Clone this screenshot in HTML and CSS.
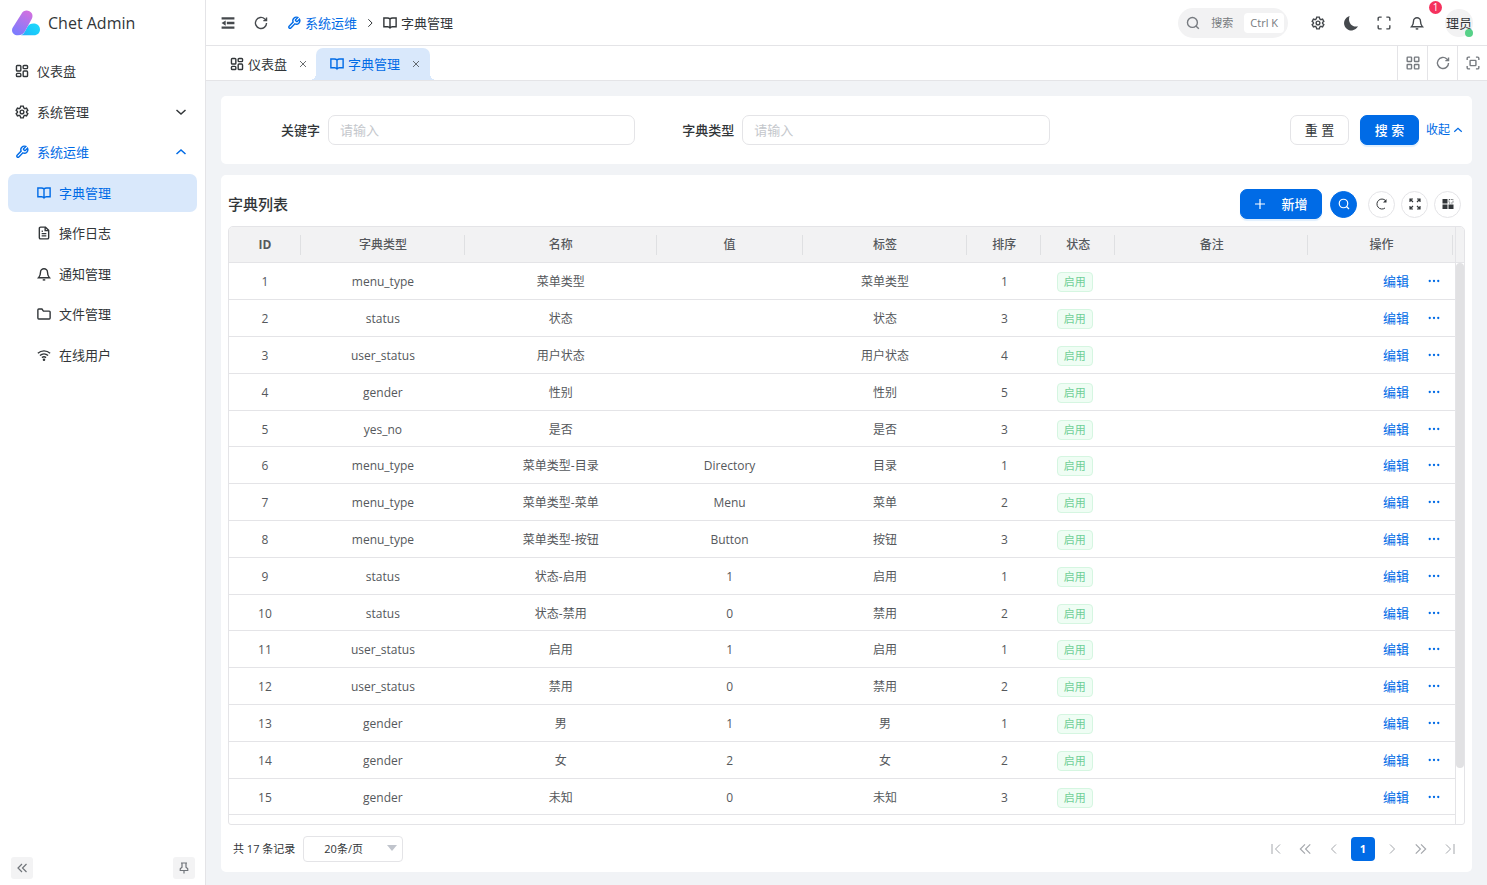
FILE: index.html
```html
<!DOCTYPE html>
<html lang="zh-CN">
<head>
<meta charset="utf-8">
<meta name="viewport" content="width=device-width, initial-scale=1">
<title>字典管理 - Chet Admin</title>
<link rel="stylesheet" href="styles.css">
</head>
<body>
<svg class="sprite" aria-hidden="true">
  <symbol id="dash" viewBox="0 0 24 24"><rect x="2.5" y="2.5" width="7.5" height="9.5" rx="1.5"/><rect x="14" y="2.5" width="7.5" height="5.5" rx="1.5"/><rect x="14" y="12" width="7.5" height="9.5" rx="1.5"/><rect x="2.5" y="16" width="7.5" height="5.5" rx="1.5"/></symbol>
  <symbol id="gear" viewBox="0 0 24 24"><path d="M9.8 2h4.4l.7 3 2 1.200 2.900-.9 2.200 3.800-2.200 2.100v1.600l2.200 2.100-2.200 3.800-2.900-.9-2 1.200-.7 3H9.800l-.7-3-2-1.200-2.900.9L2 14.900l2.200-2.100v-1.600L2 9.100l2.200-3.800 2.900.9 2-1.200z"/><circle cx="12" cy="12" r="3.200"/></symbol>
  <symbol id="wrench" viewBox="0 0 24 24"><path d="M14.700 6.300a1 1 0 0 0 0 1.400l1.600 1.600a1 1 0 0 0 1.400 0l3.770-3.770a6 6 0 0 1-7.940 7.940l-6.910 6.910a2.120 2.120 0 0 1-3-3l6.910-6.910a6 6 0 0 1 7.940-7.940z"/></symbol>
  <symbol id="book" viewBox="0 0 24 24"><path d="M12 5.500v15M12 5.500C11 4 9.500 3.500 7.500 3.500h-6v15H8c2 0 3.200.6 4 2 .8-1.400 2-2 4-2h6.500v-15h-6C14.500 3.500 13 4 12 5.500z"/></symbol>
  <symbol id="file" viewBox="0 0 24 24"><path d="M14.500 2H6a2 2 0 0 0-2 2v16a2 2 0 0 0 2 2h12a2 2 0 0 0 2-2V7.500z"/><path d="M14 2v6h6M8 9h2M8 13h8M8 17h8"/></symbol>
  <symbol id="bell" viewBox="0 0 24 24"><path d="M6 9a6 6 0 0 1 12 0c0 6 2 7.500 3.500 9.500h-19C4 16.500 6 15 6 9zM10 21.500c1 1.200 3 1.200 4 0"/></symbol>
  <symbol id="folder" viewBox="0 0 24 24"><path d="M21 20.500H3A1.500 1.500 0 0 1 1.500 19V5A1.500 1.500 0 0 1 3 3.500h5.500L11 7h10a1.500 1.500 0 0 1 1.500 1.500V19a1.500 1.500 0 0 1-1.500 1.500z"/></symbol>
  <symbol id="wifi" viewBox="0 0 24 24"><path d="M1.500 9c6-5.500 15-5.500 21 0M5 13c4-3.700 10-3.700 14 0M8.500 16.500c2-1.800 5-1.800 7 0"/><circle cx="12" cy="20" r="1"/></symbol>
  <symbol id="down" viewBox="0 0 24 24"><path d="m3 8 9 8 9-8"/></symbol>
  <symbol id="up" viewBox="0 0 24 24"><path d="m3 16 9-8 9 8"/></symbol>
  <symbol id="left" viewBox="0 0 24 24"><path d="m16 3-9 9 9 9"/></symbol>
  <symbol id="right" viewBox="0 0 24 24"><path d="m8 3 9 9-9 9"/></symbol>
  <symbol id="dleft" viewBox="0 0 24 24"><path d="m12 4-8 8 8 8M21 4l-8 8 8 8"/></symbol>
  <symbol id="dright" viewBox="0 0 24 24"><path d="m12 4 8 8-8 8M3 4l8 8-8 8"/></symbol>
  <symbol id="first" viewBox="0 0 24 24"><path d="M4 2v20M20 3l-9 9 9 9"/></symbol>
  <symbol id="last" viewBox="0 0 24 24"><path d="M20 2v20M4 3l9 9-9 9"/></symbol>
  <symbol id="pin" viewBox="0 0 24 24"><path d="M12 17v6M6 2h12M8 2v8.500L4.500 13.500V17h15v-3.500L16 10.500V2"/></symbol>
  <symbol id="fold" viewBox="0 0 24 24"><path d="M1 4h22M10 12h13M1 20h22"/><path d="M8 7.500v9L1 12z" fill="currentColor" stroke="none"/></symbol>
  <symbol id="refresh" viewBox="0 0 24 24"><path d="M21.500 12A9.500 9.500 0 1 1 18.500 5l3 3M21.500 2.500V8H16"/></symbol>
  <symbol id="search" viewBox="0 0 24 24"><circle cx="11" cy="11" r="8.500"/><path d="m17 17 5 5"/></symbol>
  <symbol id="moon" viewBox="0 0 24 24"><path d="M10 1.500A11 11 0 1 0 22.500 17C13 19.500 6.500 10 10 1.500z" fill="currentColor" stroke="none"/></symbol>
  <symbol id="corners" viewBox="0 0 24 24"><path d="M2 8V4a2 2 0 0 1 2-2h4M16 2h4a2 2 0 0 1 2 2v4M22 16v4a2 2 0 0 1-2 2h-4M8 22H4a2 2 0 0 1-2-2v-4"/></symbol>
  <symbol id="focus" viewBox="0 0 24 24"><path d="M2 7V4a2 2 0 0 1 2-2h3M17 2h3a2 2 0 0 1 2 2v3M22 17v3a2 2 0 0 1-2 2h-3M7 22H4a2 2 0 0 1-2-2v-3"/><rect x="7" y="7.500" width="10" height="9" rx="1"/></symbol>
  <symbol id="grid" viewBox="0 0 24 24"><rect x="2" y="2" width="7.500" height="7.500" rx="1"/><rect x="14.500" y="2" width="7.500" height="7.500" rx="1"/><rect x="2" y="14.500" width="7.500" height="7.500" rx="1"/><rect x="14.500" y="14.500" width="7.500" height="7.500" rx="1"/></symbol>
  <symbol id="close" viewBox="0 0 24 24"><path d="m3 3 18 18M21 3 3 21"/></symbol>
  <symbol id="plus" viewBox="0 0 24 24"><path d="M12 2v20M2 12h20"/></symbol>
  <symbol id="reload" viewBox="0 0 24 24"><path d="M18 20A10 10 0 1 1 19 5" stroke-width="2"/><path d="M21 2v7h-7z" fill="currentColor" stroke="none"/></symbol>
  <symbol id="expand" viewBox="0 0 24 24"><path d="M2 8V2h6M2 2l6 6M16 2h6v6M22 2l-6 6M22 16v6h-6M22 22l-6-6M8 22H2v-6M2 22l6-6"/></symbol>
  <symbol id="blocks" viewBox="0 0 24 24"><path d="M1 2h10v9H1zM1 13h10v9H1zM13 13h10v9H13z" fill="currentColor" stroke="none"/><path d="M14 3h8v7h-8z" stroke-width="1.500" stroke-dasharray="2 1.500"/></symbol>
  <symbol id="more" viewBox="0 0 24 24"><g fill="currentColor" stroke="none"><circle cx="3.500" cy="12" r="2.300"/><circle cx="12" cy="12" r="2.300"/><circle cx="20.500" cy="12" r="2.300"/></g></symbol>
</svg>

<div class="app">
  <aside class="sidebar">
    <a class="brand" href="#">
      <svg class="logo" viewBox="0 0 28 26" aria-hidden="true">
        <defs>
          <linearGradient id="lg1" x1="0.700" y1="0" x2="0.250" y2="1"><stop offset="0" stop-color="#d070e0"/><stop offset="1" stop-color="#7a7cff"/></linearGradient>
          <linearGradient id="lg2" x1="0" y1="1" x2="1" y2="0.300"><stop offset="0" stop-color="#2fa8f8"/><stop offset="0.500" stop-color="#19c8fb"/><stop offset="1" stop-color="#1fd6fb"/></linearGradient>
        </defs>
        <path fill="url(#lg2)" d="M9 25.300c2-.7 3-2 4-4l2.500-4.500c1.500-2.700 4-3.600 7-3.300 3.300.4 5.500 3 5.500 6 0 3.300-2.500 5.800-6 5.800z"/>
        <path fill="url(#lg1)" d="M9.500 3.700C11.200.5 14.500-.4 17.500 1.200c3 1.600 3.800 4.700 2.200 7.800L13 21.300c-1.500 2.800-3.600 4-7 4C1 25.300-1.300 21 .8 17.500z"/>
      </svg>
      <span>Chet Admin</span>
    </a>
    <nav class="menu" aria-label="主菜单">
      <a class="item" href="#"><svg class="icon"><use href="#dash"/></svg><span>仪表盘</span></a>
      <a class="item" href="#"><svg class="icon"><use href="#gear"/></svg><span>系统管理</span><svg class="icon arrow"><use href="#down"/></svg></a>
      <a class="item open" href="#"><svg class="icon"><use href="#wrench"/></svg><span>系统运维</span><svg class="icon arrow"><use href="#up"/></svg></a>
      <a class="item sub active" href="#" aria-current="page"><svg class="icon"><use href="#book"/></svg><span>字典管理</span></a>
      <a class="item sub" href="#"><svg class="icon"><use href="#file"/></svg><span>操作日志</span></a>
      <a class="item sub" href="#"><svg class="icon"><use href="#bell"/></svg><span>通知管理</span></a>
      <a class="item sub" href="#"><svg class="icon"><use href="#folder"/></svg><span>文件管理</span></a>
      <a class="item sub" href="#"><svg class="icon"><use href="#wifi"/></svg><span>在线用户</span></a>
    </nav>
    <div class="side-foot">
      <button type="button" aria-label="收起侧栏"><svg class="icon"><use href="#dleft"/></svg></button>
      <button type="button" aria-label="固定侧栏"><svg class="icon"><use href="#pin"/></svg></button>
    </div>
  </aside>

  <div class="page">
    <header class="header">
      <button class="ghost" type="button" aria-label="折叠菜单"><svg class="icon heavy"><use href="#fold"/></svg></button>
      <button class="ghost" type="button" aria-label="刷新"><svg class="icon"><use href="#refresh"/></svg></button>
      <nav class="crumbs" aria-label="面包屑">
        <a class="crumb link" href="#"><svg class="icon"><use href="#wrench"/></svg><span>系统运维</span></a>
        <svg class="icon mini"><use href="#right"/></svg>
        <span class="crumb"><svg class="icon"><use href="#book"/></svg><span>字典管理</span></span>
      </nav>
      <div class="header-right">
        <button class="quick" type="button"><svg class="icon"><use href="#search"/></svg><span>搜索</span><kbd>Ctrl K</kbd></button>
        <button class="ghost" type="button" aria-label="设置"><svg class="icon"><use href="#gear"/></svg></button>
        <button class="ghost" type="button" aria-label="主题"><svg class="icon big"><use href="#moon"/></svg></button>
        <button class="ghost" type="button" aria-label="全屏"><svg class="icon"><use href="#corners"/></svg></button>
        <button class="ghost bell" type="button" aria-label="通知"><svg class="icon"><use href="#bell"/></svg><span class="badge">1</span></button>
        <button class="avatar" type="button"><span>理员</span><i class="online"></i></button>
      </div>
    </header>

    <div class="tabs">
      <div class="tab"><a href="#"><svg class="icon"><use href="#dash"/></svg><span>仪表盘</span></a><button type="button" aria-label="关闭仪表盘"><svg class="icon tiny"><use href="#close"/></svg></button></div>
      <div class="tab current"><a href="#"><svg class="icon"><use href="#book"/></svg><span>字典管理</span></a><button type="button" aria-label="关闭字典管理"><svg class="icon tiny"><use href="#close"/></svg></button></div>
      <div class="tab-tools">
        <button type="button" aria-label="更多"><svg class="icon"><use href="#grid"/></svg></button>
        <button type="button" aria-label="刷新页面"><svg class="icon"><use href="#refresh"/></svg></button>
        <button type="button" aria-label="最大化"><svg class="icon"><use href="#focus"/></svg></button>
      </div>
    </div>

    <main class="content">
      <form class="card filter">
        <div class="field"><label for="keyword">关键字</label><input id="keyword" type="text" placeholder="请输入"></div>
        <div class="field"><label for="dtype">字典类型</label><input id="dtype" type="text" placeholder="请输入"></div>
        <div class="actions">
          <button class="btn" type="reset">重 置</button>
          <button class="btn primary" type="button">搜 索</button>
          <button class="collapse" type="button"><span>收起</span><svg class="icon mini"><use href="#up"/></svg></button>
        </div>
      </form>

      <section class="card list">
        <div class="list-head">
          <h1>字典列表</h1>
          <button class="btn primary add" type="button"><svg class="icon mini"><use href="#plus"/></svg><span>新增</span></button>
          <div class="tools">
            <button class="round on" type="button" aria-label="搜索栏"><svg class="icon mini"><use href="#search"/></svg></button>
            <button class="round" type="button" aria-label="刷新列表"><svg class="icon mini"><use href="#reload"/></svg></button>
            <button class="round" type="button" aria-label="全屏列表"><svg class="icon mini"><use href="#expand"/></svg></button>
            <button class="round" type="button" aria-label="列设置"><svg class="icon mini"><use href="#blocks"/></svg></button>
          </div>
        </div>

        <div class="grid-box">
          <table>
            <colgroup><col class="c-id"><col class="c-type"><col class="c-name"><col class="c-val"><col class="c-label"><col class="c-s"><col class="c-s"><col class="c-note"><col class="c-op"></colgroup>
            <thead><tr><th>ID</th><th>字典类型</th><th>名称</th><th>值</th><th>标签</th><th>排序</th><th>状态</th><th>备注</th><th>操作</th></tr></thead>
            <tbody>
              <tr><td>1</td><td>menu_type</td><td>菜单类型</td><td></td><td>菜单类型</td><td>1</td><td><span class="tag">启用</span></td><td></td><td class="ops"><button type="button">编辑</button><button type="button" aria-label="更多"><svg class="icon mini"><use href="#more"/></svg></button></td></tr>
              <tr><td>2</td><td>status</td><td>状态</td><td></td><td>状态</td><td>3</td><td><span class="tag">启用</span></td><td></td><td class="ops"><button type="button">编辑</button><button type="button" aria-label="更多"><svg class="icon mini"><use href="#more"/></svg></button></td></tr>
              <tr><td>3</td><td>user_status</td><td>用户状态</td><td></td><td>用户状态</td><td>4</td><td><span class="tag">启用</span></td><td></td><td class="ops"><button type="button">编辑</button><button type="button" aria-label="更多"><svg class="icon mini"><use href="#more"/></svg></button></td></tr>
              <tr><td>4</td><td>gender</td><td>性别</td><td></td><td>性别</td><td>5</td><td><span class="tag">启用</span></td><td></td><td class="ops"><button type="button">编辑</button><button type="button" aria-label="更多"><svg class="icon mini"><use href="#more"/></svg></button></td></tr>
              <tr><td>5</td><td>yes_no</td><td>是否</td><td></td><td>是否</td><td>3</td><td><span class="tag">启用</span></td><td></td><td class="ops"><button type="button">编辑</button><button type="button" aria-label="更多"><svg class="icon mini"><use href="#more"/></svg></button></td></tr>
              <tr><td>6</td><td>menu_type</td><td>菜单类型-目录</td><td>Directory</td><td>目录</td><td>1</td><td><span class="tag">启用</span></td><td></td><td class="ops"><button type="button">编辑</button><button type="button" aria-label="更多"><svg class="icon mini"><use href="#more"/></svg></button></td></tr>
              <tr><td>7</td><td>menu_type</td><td>菜单类型-菜单</td><td>Menu</td><td>菜单</td><td>2</td><td><span class="tag">启用</span></td><td></td><td class="ops"><button type="button">编辑</button><button type="button" aria-label="更多"><svg class="icon mini"><use href="#more"/></svg></button></td></tr>
              <tr><td>8</td><td>menu_type</td><td>菜单类型-按钮</td><td>Button</td><td>按钮</td><td>3</td><td><span class="tag">启用</span></td><td></td><td class="ops"><button type="button">编辑</button><button type="button" aria-label="更多"><svg class="icon mini"><use href="#more"/></svg></button></td></tr>
              <tr><td>9</td><td>status</td><td>状态-启用</td><td>1</td><td>启用</td><td>1</td><td><span class="tag">启用</span></td><td></td><td class="ops"><button type="button">编辑</button><button type="button" aria-label="更多"><svg class="icon mini"><use href="#more"/></svg></button></td></tr>
              <tr><td>10</td><td>status</td><td>状态-禁用</td><td>0</td><td>禁用</td><td>2</td><td><span class="tag">启用</span></td><td></td><td class="ops"><button type="button">编辑</button><button type="button" aria-label="更多"><svg class="icon mini"><use href="#more"/></svg></button></td></tr>
              <tr><td>11</td><td>user_status</td><td>启用</td><td>1</td><td>启用</td><td>1</td><td><span class="tag">启用</span></td><td></td><td class="ops"><button type="button">编辑</button><button type="button" aria-label="更多"><svg class="icon mini"><use href="#more"/></svg></button></td></tr>
              <tr><td>12</td><td>user_status</td><td>禁用</td><td>0</td><td>禁用</td><td>2</td><td><span class="tag">启用</span></td><td></td><td class="ops"><button type="button">编辑</button><button type="button" aria-label="更多"><svg class="icon mini"><use href="#more"/></svg></button></td></tr>
              <tr><td>13</td><td>gender</td><td>男</td><td>1</td><td>男</td><td>1</td><td><span class="tag">启用</span></td><td></td><td class="ops"><button type="button">编辑</button><button type="button" aria-label="更多"><svg class="icon mini"><use href="#more"/></svg></button></td></tr>
              <tr><td>14</td><td>gender</td><td>女</td><td>2</td><td>女</td><td>2</td><td><span class="tag">启用</span></td><td></td><td class="ops"><button type="button">编辑</button><button type="button" aria-label="更多"><svg class="icon mini"><use href="#more"/></svg></button></td></tr>
              <tr><td>15</td><td>gender</td><td>未知</td><td>0</td><td>未知</td><td>3</td><td><span class="tag">启用</span></td><td></td><td class="ops"><button type="button">编辑</button><button type="button" aria-label="更多"><svg class="icon mini"><use href="#more"/></svg></button></td></tr>
            </tbody>
          </table>
          <div class="scroll"><div class="scroll-head"></div><div class="track"><div class="thumb"></div></div></div>
        </div>

        <div class="pager">
          <span>共 17 条记录</span>
          <span class="size"><select aria-label="每页条数"><option>20条/页</option></select></span>
          <nav class="pages" aria-label="分页">
            <button type="button" aria-label="首页"><svg class="icon mini"><use href="#first"/></svg></button>
            <button type="button" aria-label="向前"><svg class="icon"><use href="#dleft"/></svg></button>
            <button type="button" aria-label="上一页"><svg class="icon mini"><use href="#left"/></svg></button>
            <button class="now" type="button">1</button>
            <button type="button" aria-label="下一页"><svg class="icon mini"><use href="#right"/></svg></button>
            <button type="button" aria-label="向后"><svg class="icon"><use href="#dright"/></svg></button>
            <button type="button" aria-label="末页"><svg class="icon mini"><use href="#last"/></svg></button>
          </nav>
        </div>
      </section>
    </main>
  </div>
</div>
</body>
</html>
```
FILE: styles.css
```css
:root {
  --blue: #006be6;
  --line: #e4e4e7;
  --text: #323639;
  --cell: #55585c;
}
* { box-sizing: border-box; }
body {
  margin: 0;
  font-family: "Open Sans", "Noto Sans CJK SC", sans-serif;
  font-size: 13px;
  line-height: 20px;
  color: var(--text);
  background: #f1f3f6;
}
button, input, select { font: inherit; color: inherit; }
button { padding: 0; border: 0; background: none; display: inline-flex; align-items: center; justify-content: center; }
a { color: inherit; text-decoration: none; }
.sprite { position: absolute; width: 0; height: 0; }
.icon { width: 14px; height: 14px; flex: none; fill: none; stroke: currentColor; stroke-width: 2.4; }
.icon.heavy { stroke-width: 4; }
.icon.big { width: 16px; height: 16px; }
.icon.mini { width: 12px; height: 12px; }
.icon.tiny { width: 8px; height: 8px; }

.app { display: flex; min-height: 100vh; }

/* Sidebar */
.sidebar { width: 206px; flex: none; display: flex; flex-direction: column; background: #fff; border-right: 1px solid var(--line); }
.brand { display: flex; align-items: center; gap: 8px; height: 45px; padding-left: 12px; font-size: 16px; font-weight: 500; }
.logo { width: 28px; height: 26px; }
.menu { display: flex; flex-direction: column; padding: 7px 8px; }
.item { display: flex; align-items: center; gap: 8px; height: 38px; margin-bottom: 2px; padding: 0 10px 0 7px; border-radius: 7px; }
.item:nth-child(odd) { margin-bottom: 3px; }
.item.sub { padding-left: 29px; }
.item.open { color: var(--blue); }
.item.active { color: var(--blue); background: #d9e8fb; }
.icon.arrow { margin-left: auto; width: 12px; height: 12px; stroke-width: 3; }
.side-foot { display: flex; justify-content: space-between; margin-top: auto; padding: 0 10px 6px 11px; }
.side-foot button { width: 22px; height: 22px; border-radius: 3px; background: #f3f3f4; color: #71757a; }
.side-foot .icon { width: 12px; height: 12px; }

/* Header */
.page { flex: 1; min-width: 0; display: flex; flex-direction: column; }
.header { display: flex; align-items: center; height: 46px; padding: 0 14px 0 5px; background: #fff; border-bottom: 1px solid var(--line); }
.ghost { width: 33px; height: 30px; }
.ghost .icon { color: #45494d; }
.crumbs { display: flex; align-items: center; gap: 5px; margin-left: 10px; }
.crumb { display: flex; align-items: center; gap: 4px; }
.crumbs > .mini { width: 10px; height: 10px; margin: 0 3px; stroke-width: 3; }
.link { color: var(--blue); }
.header-right { display: flex; align-items: center; margin-left: auto; }
.quick { height: 30px; gap: 11px; margin-right: 13px; padding: 0 4px 0 8px; border-radius: 15px; background: #f2f2f3; color: #777b80; font-size: 11px; }
kbd { padding: 0 6px; border-radius: 4px; background: #fff; font: inherit; font-size: 11px; line-height: 20px; }
.bell { position: relative; }
.badge { position: absolute; top: -7px; right: -9px; width: 13px; height: 13px; border-radius: 50%; background: #f5315d; color: #fff; font-size: 10px; line-height: 13px; text-align: center; }
.avatar { position: relative; width: 28px; height: 28px; margin-left: 12px; border-radius: 50%; background: #f2f2f3; white-space: nowrap; }
.online { position: absolute; right: 0; bottom: 0; width: 8px; height: 8px; border-radius: 50%; background: #57d188; }

/* Tabs */
.tabs { display: flex; align-items: flex-end; height: 35px; padding-left: 10px; background: #fff; border-bottom: 1px solid var(--line); }
.tab { position: relative; display: flex; align-items: center; gap: 12px; height: 32px; padding: 0 10px 0 14px; }
.tab:first-child { padding-right: 9px; }
.tab a { display: flex; align-items: center; gap: 4px; }
.tab.current { color: var(--blue); background: #d9e8fb; border-radius: 7px 7px 0 0; }
.tab button { color: #45494d; }
.tab.current::before, .tab.current::after { content: ""; position: absolute; bottom: 0; width: 6px; height: 6px; }
.tab.current::before { left: -6px; background: radial-gradient(circle at 0 0, transparent 6px, #d9e8fb 6px); }
.tab.current::after { right: -6px; background: radial-gradient(circle at 100% 0, transparent 6px, #d9e8fb 6px); }
.tab-tools { display: flex; align-self: stretch; margin-left: auto; }
.tab-tools button { width: 30px; border-left: 1px solid var(--line); color: #777b80; }

/* Content */
.content { flex: 1; display: flex; flex-direction: column; gap: 11px; padding: 15px 15px 13px; }
.card { background: #fff; border-radius: 5px; }
.filter { display: grid; grid-template-columns: repeat(3, 1fr); gap: 8px; padding: 19px 8px; }
.field { display: flex; align-items: center; gap: 8px; }
.field label { width: 91px; text-align: right; font-weight: 500; }
.field input { flex: 1; min-width: 0; height: 30px; padding: 0 11px; border: 1px solid var(--line); border-radius: 7px; outline: 0; }
.field input::placeholder { color: #c4c7cc; }
.actions { display: flex; align-items: center; justify-content: flex-end; gap: 11px; }
.btn { width: 59px; height: 30px; border: 1px solid var(--line); border-radius: 7px; background: #fff; }
.primary { border-color: var(--blue); background: var(--blue); color: #fff; font-weight: 500; box-shadow: 0 2px 1px #e0effd; }
.collapse { gap: 3px; margin: 0 1px 0 -4px; color: var(--blue); font-size: 12px; }
.icon.mini { stroke-width: 2.4; }
.collapse .icon.mini { width: 10px; height: 10px; stroke-width: 3; }

.list { flex: 1; display: flex; flex-direction: column; padding: 14px 7px 10px; }
.list-head { display: flex; align-items: center; gap: 8px; height: 30px; margin-bottom: 7px; }
h1 { margin: 0 auto 0 0; font-size: 15px; font-weight: 500; }
.add { width: 82px; gap: 15px; }
.tools { display: flex; gap: 6px; padding-right: 4px; }
.round { width: 27px; height: 27px; border: 1px solid var(--line); border-radius: 50%; }
.round.on { margin-right: 5px; border-color: var(--blue); background: var(--blue); color: #fff; }

.grid-box { flex: 1; display: flex; align-items: stretch; border: 1px solid var(--line); border-radius: 5px 5px 3px 3px; overflow: hidden; font-size: 12px; line-height: 18px; }
table { flex: 1; align-self: flex-start; table-layout: fixed; border-collapse: separate; border-spacing: 0; text-align: center; color: var(--cell); }
.c-id { width: 72px; }
.c-s { width: 74px; }
.c-type { width: 164px; }
.c-name { width: 192px; }
.c-val { width: 146px; }
.c-label { width: 165px; }
.c-note { width: 193px; }
.c-op { width: 147px; }
th, td { padding: 0; border-bottom: 1px solid var(--line); }
th { height: 36px; font-weight: 500; background: linear-gradient(#dfe0e2, #dfe0e2) 100% 50% / 1px 20px no-repeat #f2f2f3; }
th:first-child { font-weight: 700; }
th:last-child { background-position: calc(100% - 2px) 50%; }
td { height: 37px; padding-top: 2px; }
tr:nth-child(5n) td { height: 36px; }
.tag { display: inline-block; margin-right: 7px; padding: 0 6px; border: 1px solid #d5f6e1; border-radius: 4px; background: #effdf4; color: #6fcf97; font-size: 11px; line-height: 18px; }
td.ops { text-align: right; padding: 0 15px 0 0; color: var(--blue); }
.ops button { vertical-align: middle; font-size: 13px; }
.ops button + button { margin-left: 19px; }
.scroll { width: 9px; flex: none; display: flex; flex-direction: column; border-left: 1px solid var(--line); }
.scroll-head { height: 36px; background: #f2f2f3; border-bottom: 1px solid var(--line); }
.track { flex: 1; }
.thumb { height: 90%; border-radius: 4px; background: #e1e1e3; }

.pager { display: flex; align-items: center; gap: 8px; margin-top: 11px; padding: 0 3px 0 5px; font-size: 11px; line-height: 18px; }
.size { position: relative; }
.size::after { content: ""; position: absolute; top: 9px; right: 6px; border: 5px solid transparent; border-top: 6px solid #c0c4cc; border-bottom: 0; pointer-events: none; }
.size select { appearance: none; display: block; width: 100px; height: 26px; padding: 0 20px; border: 1px solid var(--line); border-radius: 4px; background: #fff; }
.pages { display: flex; gap: 5px; margin-left: auto; color: #a4a7ac; }
.pages button { width: 24px; height: 24px; border-radius: 4px; }
.pages .icon { stroke-width: 2; }
.pages .now { background: var(--blue); color: #fff; font-weight: 700; }
```
